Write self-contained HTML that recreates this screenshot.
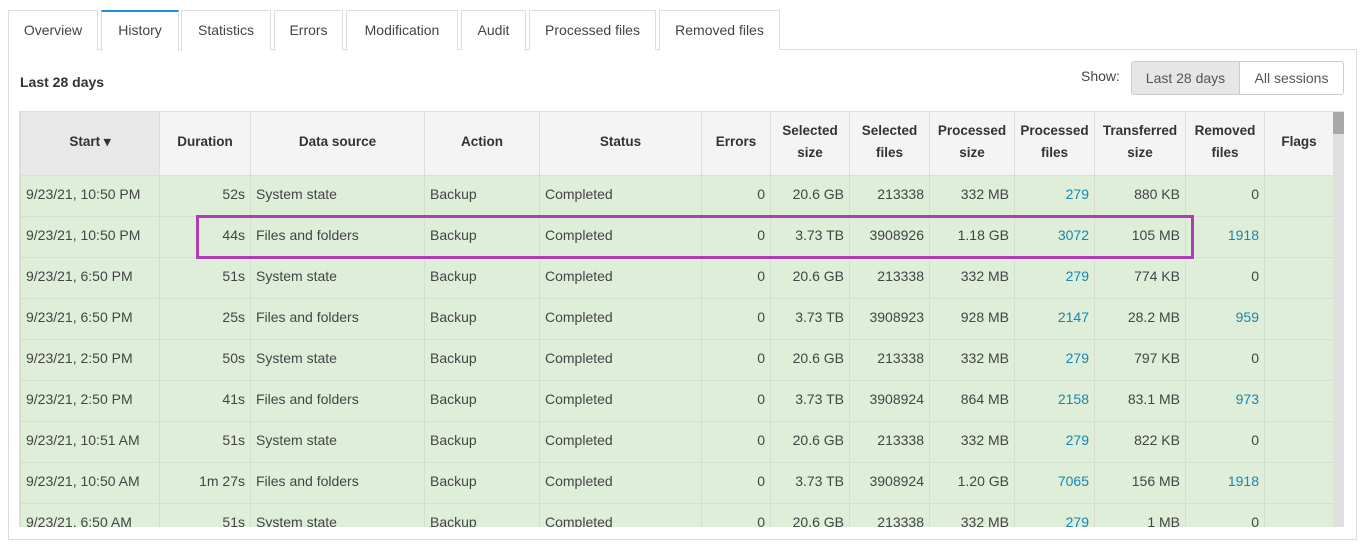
<!DOCTYPE html>
<html><head><meta charset="utf-8"><style>
*{box-sizing:border-box;margin:0;padding:0}
body{width:1369px;height:551px;background:#fff;font-family:"Liberation Sans",sans-serif;font-size:14px;color:#333;position:relative;overflow:hidden}
.tab{position:absolute;top:10px;height:40px;border:1px solid #ddd;border-bottom:none;background:#fff;color:#444;font-size:14px;line-height:38px;text-align:center}
.tab.act{border-top:2px solid #1a8fd8;height:41px;z-index:2;line-height:36px}
.panel{position:absolute;left:8px;top:49px;width:1349px;height:491px;border:1px solid #ddd}
.ttl{position:absolute;left:20px;top:74px;font-weight:bold;font-size:14px;color:#333}
.show{position:absolute;left:1081px;top:68px;font-size:14px;color:#444}
.btns{position:absolute;left:1131px;top:61px;width:213px;height:34px;border:1px solid #ccc;border-radius:3px;display:flex;overflow:hidden;font-size:14px;color:#555}
.btns div{line-height:32px;text-align:center}
.wrap{position:absolute;left:19px;top:111px;width:1325px;height:416px;overflow:hidden;border-top:1px solid #ddd;border-left:1px solid #ddd}
table{border-collapse:collapse;table-layout:fixed;width:1313px;position:absolute;left:0;top:0}
th{height:63px;background:#f4f4f4;font-weight:bold;font-size:13.5px;color:#333;border:1px solid #ddd;border-top:none;line-height:22px;text-align:center;padding-bottom:3px}
th.s{background:#e8e8e8}
td{height:41px;background:#dfeed9;border:1px solid #d8dcd4;padding:0 5px 4px;white-space:nowrap;font-size:14px;color:#444}
td.r{text-align:right}
a{color:#1a86b0;text-decoration:none}
.sb{position:absolute;left:1313px;top:0;width:12px;height:416px;background:#e0e0e0}
.th{position:absolute;left:1313px;top:0;width:12px;height:22px;background:#a9a9a9}
.hl{position:absolute;left:196px;top:215px;width:998px;height:44px;border:3px solid #b03cb8;z-index:5}
</style></head><body>
<div class="panel"></div>
<div class="tab" style="left:8px;width:90px">Overview</div>
<div class="tab act" style="left:101px;width:78px">History</div>
<div class="tab" style="left:181px;width:90px">Statistics</div>
<div class="tab" style="left:274px;width:69px">Errors</div>
<div class="tab" style="left:346px;width:112px">Modification</div>
<div class="tab" style="left:461px;width:65px">Audit</div>
<div class="tab" style="left:529px;width:127px">Processed files</div>
<div class="tab" style="left:659px;width:121px">Removed files</div>
<div class="ttl">Last 28 days</div>
<div class="show">Show:</div>
<div class="btns"><div style="width:109px;background:#e6e6e6;border-right:1px solid #ccc">Last 28 days</div><div style="width:104px">All sessions</div></div>
<div class="wrap">
<table>
<colgroup><col style="width:139px"><col style="width:91px"><col style="width:174px"><col style="width:115px"><col style="width:162px"><col style="width:69px"><col style="width:79px"><col style="width:80px"><col style="width:85px"><col style="width:80px"><col style="width:91px"><col style="width:79px"><col style="width:69px"></colgroup>
<tr><th class="s">Start ▾</th><th>Duration</th><th>Data source</th><th>Action</th><th>Status</th><th>Errors</th><th>Selected<br>size</th><th>Selected<br>files</th><th>Processed<br>size</th><th>Processed<br>files</th><th>Transferred<br>size</th><th>Removed<br>files</th><th>Flags</th></tr>
<tr><td>9/23/21, 10:50 PM</td><td class="r">52s</td><td>System state</td><td>Backup</td><td>Completed</td><td class="r">0</td><td class="r">20.6 GB</td><td class="r">213338</td><td class="r">332 MB</td><td class="r"><a>279</a></td><td class="r">880 KB</td><td class="r">0</td><td></td></tr>
<tr><td>9/23/21, 10:50 PM</td><td class="r">44s</td><td>Files and folders</td><td>Backup</td><td>Completed</td><td class="r">0</td><td class="r">3.73 TB</td><td class="r">3908926</td><td class="r">1.18 GB</td><td class="r"><a>3072</a></td><td class="r">105 MB</td><td class="r"><a>1918</a></td><td></td></tr>
<tr><td>9/23/21, 6:50 PM</td><td class="r">51s</td><td>System state</td><td>Backup</td><td>Completed</td><td class="r">0</td><td class="r">20.6 GB</td><td class="r">213338</td><td class="r">332 MB</td><td class="r"><a>279</a></td><td class="r">774 KB</td><td class="r">0</td><td></td></tr>
<tr><td>9/23/21, 6:50 PM</td><td class="r">25s</td><td>Files and folders</td><td>Backup</td><td>Completed</td><td class="r">0</td><td class="r">3.73 TB</td><td class="r">3908923</td><td class="r">928 MB</td><td class="r"><a>2147</a></td><td class="r">28.2 MB</td><td class="r"><a>959</a></td><td></td></tr>
<tr><td>9/23/21, 2:50 PM</td><td class="r">50s</td><td>System state</td><td>Backup</td><td>Completed</td><td class="r">0</td><td class="r">20.6 GB</td><td class="r">213338</td><td class="r">332 MB</td><td class="r"><a>279</a></td><td class="r">797 KB</td><td class="r">0</td><td></td></tr>
<tr><td>9/23/21, 2:50 PM</td><td class="r">41s</td><td>Files and folders</td><td>Backup</td><td>Completed</td><td class="r">0</td><td class="r">3.73 TB</td><td class="r">3908924</td><td class="r">864 MB</td><td class="r"><a>2158</a></td><td class="r">83.1 MB</td><td class="r"><a>973</a></td><td></td></tr>
<tr><td>9/23/21, 10:51 AM</td><td class="r">51s</td><td>System state</td><td>Backup</td><td>Completed</td><td class="r">0</td><td class="r">20.6 GB</td><td class="r">213338</td><td class="r">332 MB</td><td class="r"><a>279</a></td><td class="r">822 KB</td><td class="r">0</td><td></td></tr>
<tr><td>9/23/21, 10:50 AM</td><td class="r">1m 27s</td><td>Files and folders</td><td>Backup</td><td>Completed</td><td class="r">0</td><td class="r">3.73 TB</td><td class="r">3908924</td><td class="r">1.20 GB</td><td class="r"><a>7065</a></td><td class="r">156 MB</td><td class="r"><a>1918</a></td><td></td></tr>
<tr><td>9/23/21, 6:50 AM</td><td class="r">51s</td><td>System state</td><td>Backup</td><td>Completed</td><td class="r">0</td><td class="r">20.6 GB</td><td class="r">213338</td><td class="r">332 MB</td><td class="r"><a>279</a></td><td class="r">1 MB</td><td class="r">0</td><td></td></tr>
</table>
<div class="sb"></div><div class="th"></div>
</div>
<div class="hl"></div>
</body></html>
